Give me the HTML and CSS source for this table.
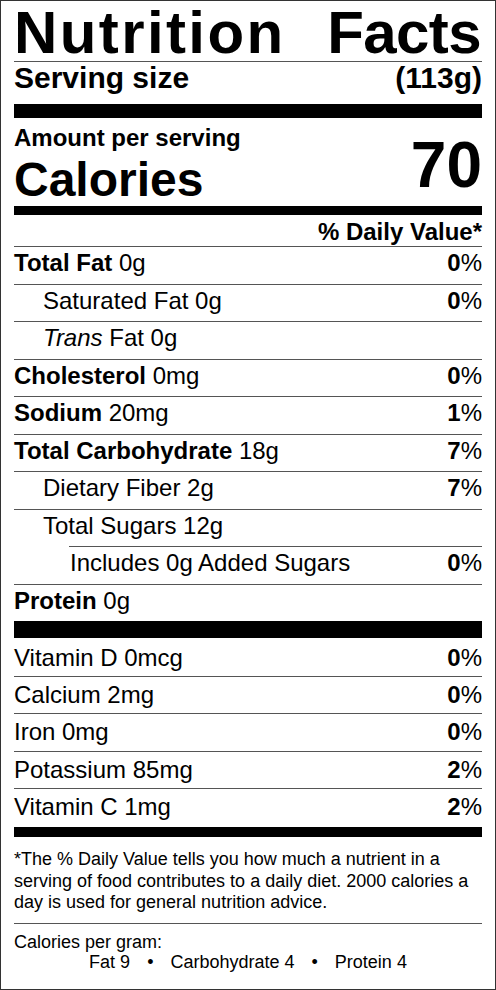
FILE: index.html
```html
<!DOCTYPE html>
<html lang="en">
<head>
<meta charset="utf-8">
<title>Nutrition Facts</title>
<link rel="stylesheet" href="styles.css">
</head>
<body>
<div class="label">
  <h1 class="title"><span class="w1">Nutrition</span><span class="w2">Facts</span></h1>
  <div class="serving"><span>Serving size</span><span>(113g)</span></div>
  <div class="bar bar-thick"></div>
  <div class="calories">
    <div class="cal-left">
      <div class="aps">Amount per serving</div>
      <div class="cal">Calories</div>
    </div>
    <div class="cal-num">70</div>
  </div>
  <div class="bar bar-med"></div>
  <div class="dv-head">% Daily Value*</div>

  <div class="row"><span><b>Total Fat</b> 0g</span><span class="pct"><b>0</b>%</span></div>
  <div class="row indent"><span>Saturated Fat 0g</span><span class="pct"><b>0</b>%</span></div>
  <div class="row indent"><span><i>Trans</i> Fat 0g</span></div>
  <div class="row"><span><b>Cholesterol</b> 0mg</span><span class="pct"><b>0</b>%</span></div>
  <div class="row"><span><b>Sodium</b> 20mg</span><span class="pct"><b>1</b>%</span></div>
  <div class="row"><span><b>Total Carbohydrate</b> 18g</span><span class="pct"><b>7</b>%</span></div>
  <div class="row indent"><span>Dietary Fiber 2g</span><span class="pct"><b>7</b>%</span></div>
  <div class="row indent sugars"><span>Total Sugars 12g</span></div>
  <div class="row indent2"><span>Includes 0g Added Sugars</span><span class="pct"><b>0</b>%</span></div>
  <div class="row last"><span><b>Protein</b> 0g</span></div>
  <div class="bar bar-thick2"></div>

  <div class="row vit first"><span>Vitamin D 0mcg</span><span class="pct"><b>0</b>%</span></div>
  <div class="row vit"><span>Calcium 2mg</span><span class="pct"><b>0</b>%</span></div>
  <div class="row vit"><span>Iron 0mg</span><span class="pct"><b>0</b>%</span></div>
  <div class="row vit"><span>Potassium 85mg</span><span class="pct"><b>2</b>%</span></div>
  <div class="row vit last"><span>Vitamin C 1mg</span><span class="pct"><b>2</b>%</span></div>
  <div class="bar bar-med2"></div>

  <p class="footnote">*The % Daily Value tells you how much a nutrient in a serving of food contributes to a daily diet. 2000 calories a day is used for general nutrition advice.</p>
  <div class="cpg">
    <div>Calories per gram:</div>
    <div class="cpg-items"><span>Fat 9</span><span class="dot">•</span><span>Carbohydrate 4</span><span class="dot">•</span><span>Protein 4</span></div>
  </div>
</div>
</body>
</html>
```
FILE: styles.css
```css
html, body {
  margin: 0;
  padding: 0;
  background: #fff;
}

body {
  font-family: "Liberation Sans", Arial, Helvetica, sans-serif;
  color: #000;
}

.label {
  width: 496px;
  height: 990px;
  box-sizing: border-box;
  border: 1px solid #333;
  padding: 0 13px;
  background: #fff;
}

.title {
  display: flex;
  justify-content: space-between;
  margin: 0;
  padding-top: 3px;
  font-size: 60px;
  line-height: 57px;
  font-weight: bold;
  border-bottom: 1px solid #555;
}

.title .w1 {
  letter-spacing: 2.4px;
}

.title .w2 {
  letter-spacing: -0.6px;
  margin-right: 1px;
}

.serving {
  display: flex;
  justify-content: space-between;
  font-size: 30px;
  line-height: 32px;
  font-weight: bold;
}

.bar {
  background: #000;
}

.bar-thick {
  margin-top: 10px;
  height: 14px;
}

.calories {
  display: flex;
  justify-content: space-between;
  align-items: flex-start;
  padding-top: 8px;
}

.aps {
  font-size: 24px;
  line-height: 24px;
  font-weight: bold;
}

.cal {
  margin-top: 6px;
  font-size: 48px;
  line-height: 48px;
  font-weight: bold;
}

.cal-num {
  margin-top: 7px;
  font-size: 64px;
  line-height: 64px;
  font-weight: bold;
}

.bar-med {
  margin-top: 2px;
  height: 9px;
}

.dv-head {
  text-align: right;
  font-size: 24px;
  line-height: 24px;
  font-weight: bold;
  padding: 5px 0 2px;
  border-bottom: 1px solid #555;
}

.row {
  display: flex;
  justify-content: space-between;
  box-sizing: border-box;
  height: 37.5px;
  padding-top: 4px;
  font-size: 24px;
  line-height: 24px;
  border-bottom: 1px solid #555;
}

.row.indent {
  padding-left: 29px;
}

.row.indent2 {
  padding-left: 56px;
}

.row.sugars {
  border-bottom: none;
  background: linear-gradient(#555, #555) no-repeat right bottom / calc(100% - 55px) 1px;
}

.row.last {
  border-bottom: none;
  height: 36px;
}

.row.vit {
  padding-top: 6px;
}

.row.vit.first {
  height: 39px;
  padding-top: 8px;
}

.row.vit.last {
  height: 38px;
}

.pct b {
  font-weight: bold;
}

.bar-thick2 {
  height: 17px;
}

.bar-med2 {
  height: 10px;
}

.footnote {
  margin: 0;
  padding: 12px 0 9px;
  font-size: 18px;
  line-height: 21.5px;
  border-bottom: 1px solid #555;
}

.cpg {
  padding-top: 8px;
  font-size: 18px;
  line-height: 20px;
}

.cpg-items {
  display: flex;
  justify-content: center;
}

.dot {
  margin: 0 17px;
}
```
